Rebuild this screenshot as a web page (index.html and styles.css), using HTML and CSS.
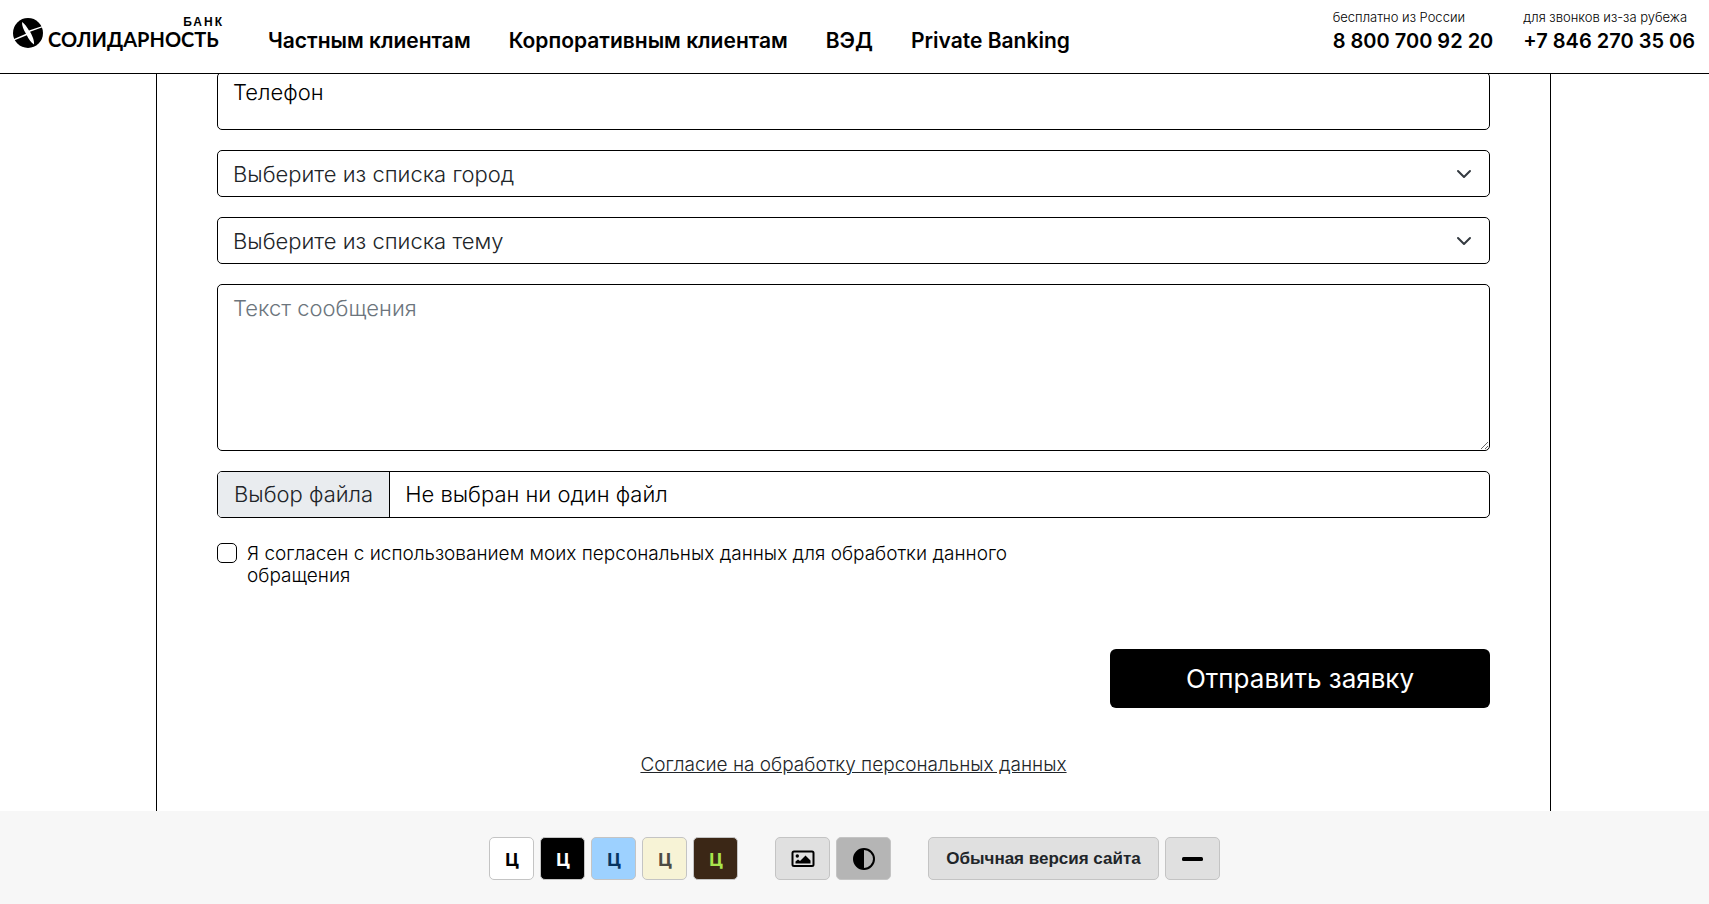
FILE: index.html
```html
<!DOCTYPE html>
<html lang="ru">
<head>
<meta charset="utf-8">
<meta name="viewport" content="width=device-width, initial-scale=1">
<title>Банк Солидарность</title>
<link rel="stylesheet" href="styles.css">
</head>
<body>
<header class="header">
  <a class="logo" href="#" aria-label="Банк Солидарность">
    <svg class="logo-mark" viewBox="0 0 30 30" aria-hidden="true">
      <circle cx="15" cy="15" r="15"/>
      <path class="logo-cut" d="M9 4C11.500 5.500 14 9 16 12.500L29.500 8V9.300L17 13.800C19.500 18 21.500 23 21 26.500C18 24.500 15.500 21 13.800 17.300L1 22.500V21L13 15.800C10.500 12 8.800 7.500 9 4Z"/>
    </svg>
    <span class="logo-text"><span class="logo-small">БАНК</span><span class="logo-name">СОЛИДАРНОСТЬ</span></span>
  </a>
  <nav class="nav">
    <a href="#">Частным клиентам</a>
    <a href="#">Корпоративным клиентам</a>
    <a href="#">ВЭД</a>
    <a href="#">Private Banking</a>
  </nav>
  <div class="phones">
    <div class="phone"><span class="phone-note">бесплатно из России</span><a href="tel:88007009220">8 800 700 92 20</a></div>
    <div class="phone"><span class="phone-note">для звонков из-за рубежа</span><a href="tel:+78462703506">+7 846 270 35 06</a></div>
  </div>
</header>

<main class="main">
  <form class="form">
    <input class="field field-phone" type="tel" placeholder="Телефон" aria-label="Телефон">
    <select class="field field-select" aria-label="Город"><option>Выберите из списка город</option></select>
    <select class="field field-select" aria-label="Тема"><option>Выберите из списка тему</option></select>
    <textarea class="field field-message" placeholder="Текст сообщения" aria-label="Текст сообщения"></textarea>
    <label class="file">
      <input class="file-input" type="file">
      <span class="file-button">Выбор файла</span>
      <span class="file-name">Не выбран ни один файл</span>
    </label>
    <div class="consent">
      <input class="consent-box" type="checkbox" id="consent">
      <label for="consent">Я согласен с использованием моих персональных данных для обработки данного обращения</label>
    </div>
    <button class="submit" type="button">Отправить заявку</button>
    <a class="policy" href="#">Согласие на обработку персональных данных</a>
  </form>
</main>

<footer class="tools">
  <div class="tool-group tool-group-colors">
    <button class="tool swatch swatch-white" type="button">Ц</button>
    <button class="tool swatch swatch-black" type="button">Ц</button>
    <button class="tool swatch swatch-blue" type="button">Ц</button>
    <button class="tool swatch swatch-beige" type="button">Ц</button>
    <button class="tool swatch swatch-brown" type="button">Ц</button>
  </div>
  <div class="tool-group">
    <button class="tool tool-icon" type="button" aria-label="Изображения">
      <svg width="24" height="18" viewBox="0 0 24 18"><rect x="1.500" y="1.500" width="21" height="14.500" rx="1.500" fill="none" stroke="#000" stroke-width="2"/><circle cx="6.300" cy="6" r="1.700"/><path d="M4.500 13.500V11.500L7 9.500L9 11L14.500 5.500L19.500 10.500V13.500Z"/></svg>
    </button>
    <button class="tool tool-icon tool-active" type="button" aria-label="Контраст">
      <svg width="24" height="24" viewBox="0 0 24 24"><circle cx="12" cy="12" r="10" fill="none" stroke="#000" stroke-width="2"/><path d="M12 2A10 10 0 0 0 12 22Z"/></svg>
    </button>
  </div>
  <div class="tool-group">
    <button class="tool tool-normal" type="button">Обычная версия сайта</button>
    <button class="tool tool-icon" type="button" aria-label="Свернуть">
      <svg width="22" height="4" viewBox="0 0 22 4"><rect x="1" width="21" height="4" rx="1.500"/></svg>
    </button>
  </div>
</footer>
</body>
</html>
```
FILE: styles.css
```css
* { box-sizing: border-box; }

body {
  margin: 0;
  height: 100vh;
  display: flex;
  flex-direction: column;
  overflow: hidden;
  background: #fff;
  color: #000;
  font-family: Inter, "Open Sans", sans-serif;
  font-size: 22px;
}

a { color: inherit; text-decoration: none; }
button, input, select, textarea { font: inherit; color: inherit; }

.header {
  display: flex;
  align-items: flex-start;
  flex: none;
  padding: 9px 14px 20px 13px;
  border-bottom: 1px solid #000;
  background: #fff;
  z-index: 1;
}

.logo {
  display: flex;
  gap: 5px;
  width: 255px;
  padding-top: 8px;
}
.logo-mark { width: 30px; height: 30px; margin-top: 1px; }
.logo-cut { fill: #fff; }
.logo-text {
  display: flex;
  flex-direction: column;
  width: 176px;
  font-family: Lato, sans-serif;
}
.logo-small {
  align-self: flex-end;
  font: 700 12px/10px "Liberation Sans", sans-serif;
  letter-spacing: 2px;
}
.logo-name { font-size: 20px; line-height: 25px; font-weight: 700; }

.nav {
  display: flex;
  gap: 38px;
  padding-top: 20px;
  font-size: 21px;
  font-weight: 600;
  line-height: 24px;
  white-space: nowrap;
}

.phones {
  display: flex;
  gap: 30px;
  margin-left: auto;
  white-space: nowrap;
}
.phone {
  display: flex;
  flex-direction: column;
  gap: 4px;
  font-size: 20px;
  font-weight: 600;
  line-height: 24px;
}
.phone-note { font-size: 13px; line-height: 16px; font-weight: 300; }

.main {
  flex: 1;
  min-height: 0;
  margin: 0 158px 0 156px;
  padding: 0 60px;
  border: solid #000;
  border-width: 0 1px;
}

.form {
  display: flex;
  flex-direction: column;
  gap: 20px;
  margin-top: -2px;
  font-weight: 300;
}

.field {
  width: 100%;
  margin: 0;
  padding: 0 15px;
  border: 1px solid #000;
  border-radius: 5px;
  background-color: #fff;
}
.field::placeholder { color: #6c757d; opacity: 1; }
.field-phone { height: 58px; padding-bottom: 18px; }
.field-phone::placeholder { color: #000; }
.field-select {
  appearance: none;
  height: 47px;
  color: #212529;
  background: #fff url("data:image/svg+xml,%3Csvg xmlns='http://www.w3.org/2000/svg' viewBox='0 0 16 16'%3E%3Cpath fill='none' stroke='%23343a40' stroke-linecap='round' stroke-linejoin='round' stroke-width='2' d='m2 5 6 6 6-6'/%3E%3C/svg%3E") no-repeat right 17px center / 16px 16px;
}
.field-message { display: block; height: 167px; padding-top: 8px; line-height: 30px; resize: vertical; }

.file {
  display: flex;
  height: 47px;
  line-height: 45px;
  border: 1px solid #000;
  border-radius: 5px;
  overflow: hidden;
}
.file-input { position: absolute; opacity: 0; width: 1px; height: 1px; }
.file-button { padding: 0 16px; border-right: 1px solid #000; background: #e9ecef; color: #212529; }
.file-name { padding: 0 15px; }

.consent {
  display: flex;
  gap: 10px;
  max-width: 840px;
  padding-top: 5px;
  font-size: 19px;
  line-height: 22px;
}
.consent-box {
  appearance: none;
  flex: none;
  width: 20px;
  height: 20px;
  margin: 0;
  border: 1px solid #000;
  border-radius: 5px;
}

.submit {
  align-self: flex-end;
  width: 380px;
  height: 59px;
  margin-top: 42px;
  border: 0;
  border-radius: 6px;
  background: #000;
  color: #fff;
  font-size: 26px;
  font-weight: 400;
}

.policy {
  align-self: center;
  margin-top: 26px;
  font-size: 19px;
  line-height: 22px;
  color: #212529;
  text-decoration: underline;
}

.tools {
  display: flex;
  flex: none;
  flex-wrap: wrap;
  justify-content: center;
  gap: 37px;
  padding: 26px 16px 24px;
  background: #f7f7f7;
  z-index: 1;
}
.tool-group { display: flex; gap: 6px; }
.tool {
  display: flex;
  align-items: center;
  justify-content: center;
  height: 43px;
  padding: 0;
  border: 1px solid #c4c4c4;
  border-radius: 5px;
  background: #e0e0e0;
  color: #212529;
  font: 700 17px "Liberation Sans", sans-serif;
}
.swatch { width: 45px; font: 700 18px "Noto Sans", sans-serif; }
.swatch-white { background: #fff; color: #000; }
.swatch-black { background: #000; color: #fff; }
.swatch-blue { background: #9dd1ff; color: #063462; }
.swatch-beige { background: #f7f3d6; color: #4d4b43; }
.swatch-brown { background: #3b2716; color: #a9e44d; }
.tool-icon { width: 55px; }
.tool-active { background: #b5b5b5; }
.tool-normal { padding: 0 17px; }
```
